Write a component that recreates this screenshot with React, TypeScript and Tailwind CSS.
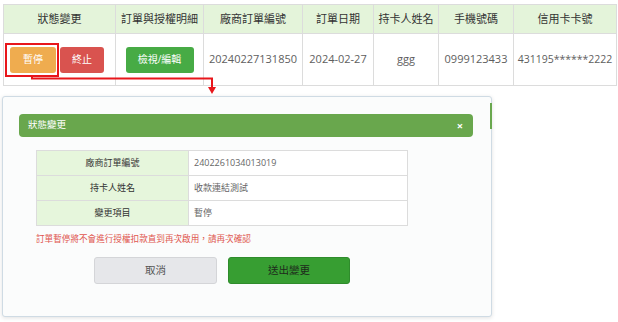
import React from "react";

const FONT = "font-['Open_Sans','Noto_Sans_CJK_TC',sans-serif]";

const HEADERS: [string, string][] = [
  ["狀態變更", "w-[112px]"],
  ["訂單與授權明細", "w-[88px]"],
  ["廠商訂單編號", "w-[99px]"],
  ["訂單日期", "w-[71px]"],
  ["持卡人姓名", "w-[65px]"],
  ["手機號碼", "w-[75px]"],
  ["信用卡卡號", "w-[103px]"],
];

const DETAIL_ROWS = [
  ["廠商訂單編號", "2402261034013019"],
  ["持卡人姓名", "收款連結測試"],
  ["變更項目", "暫停"],
];

export default function App() {
  return (
    <div className={`relative w-[618px] h-[322px] overflow-hidden bg-white ${FONT}`}>
      {/* order list behind the dialog */}
      <table className="ml-[3px] mt-[4px] w-[613px] table-fixed border-collapse">
        <thead>
          <tr className="h-[29px] bg-[#e4f4da]">
            {HEADERS.map(([label, w]) => (
              <th
                key={label}
                className={`${w} border border-[#dcdcdc] text-center text-[11px] font-normal text-[#333]`}
              >
                {label}
              </th>
            ))}
          </tr>
        </thead>
        <tbody>
          <tr className="h-[52px] text-[11px] text-[#5e5e5e]">
            <td className="border border-[#dcdcdc] px-[6px]">
              <div className="flex gap-[4px]">
                <button className="h-[26px] w-[46px] rounded-[3px] bg-[#efac4f] text-[10px] text-white">暫停</button>
                <button className="h-[26px] w-[44px] rounded-[3px] bg-[#d9534f] text-[10px] text-white">終止</button>
              </div>
            </td>
            <td className="border border-[#dcdcdc] text-center">
              <button className="h-[26px] w-[68px] rounded-[3px] bg-[#47ab45] text-[10px] text-white">檢視/編輯</button>
            </td>
            <td className="border border-[#dcdcdc] text-center">20240227131850</td>
            <td className="border border-[#dcdcdc] text-center">2024-02-27</td>
            <td className="border border-[#dcdcdc] text-center">ggg</td>
            <td className="border border-[#dcdcdc] text-center">0999123433</td>
            <td className="border border-[#dcdcdc] text-center text-[10.5px]">431195******2222</td>
          </tr>
        </tbody>
      </table>

      {/* highlight box and arrow */}
      <div className="absolute left-[5px] top-[43px] h-[34px] w-[54px] border-2 border-[#e8161b]" />
      <svg className="absolute left-0 top-0" width="618" height="100" viewBox="0 0 618 100">
        <polyline points="32,76 32,78.5 212,78.5 212,89" fill="none" stroke="#e8161b" strokeWidth="2" />
        <polygon points="208,87 216,87 212,94" fill="#e8161b" />
      </svg>

      {/* dialog */}
      <div className="absolute left-[2px] top-[96px] h-[221px] w-[490px] rounded-[3px] border border-[#cfdbe4] bg-[#fbfcfc] pl-[16px] pt-[17px] shadow-[0_1px_4px_rgba(0,0,0,0.12)]">
        <div className="absolute right-[-1px] top-[6px] h-[26px] w-[2px] bg-[#6aa84f]" />
        <div className="flex h-[23px] w-[454px] items-center justify-between rounded-[4px] bg-[#69a74d] pl-[9px] pr-[10px] text-white">
          <span className="text-[9.5px]">狀態變更</span>
          <span className="text-[11px] font-bold leading-none">×</span>
        </div>

        <table className="ml-[17px] mt-[13px] w-[372px] table-fixed border-collapse text-[9px]">
          <tbody>
            {DETAIL_ROWS.map(([k, v]) => (
              <tr key={k} className="h-[25px]">
                <td className="w-[152px] border border-[#dcdcdc] bg-[#e6f6dc] text-center text-[#333]">{k}</td>
                <td className="border border-[#dcdcdc] bg-white pl-[5px] text-[#666]">{v}</td>
              </tr>
            ))}
          </tbody>
        </table>

        <p className="ml-[17px] mt-[7px] text-[8.6px] leading-[12px] text-[#e0564f]">
          訂單暫停將不會進行授權扣款直到再次啟用，請再次確認
        </p>

        <div className="ml-[75px] mt-[12px] flex gap-[11px]">
          <button className="h-[27px] w-[123px] rounded-[3px] border border-[#d4d5d8] bg-[#e6e7ea] text-[10.5px] text-[#555]">
            取消
          </button>
          <button className="h-[27px] w-[122px] rounded-[3px] border border-[#2f8c2c] bg-[#379e32] text-[10.5px] text-[#1e2a1c]">
            送出變更
          </button>
        </div>
      </div>
    </div>
  );
}
